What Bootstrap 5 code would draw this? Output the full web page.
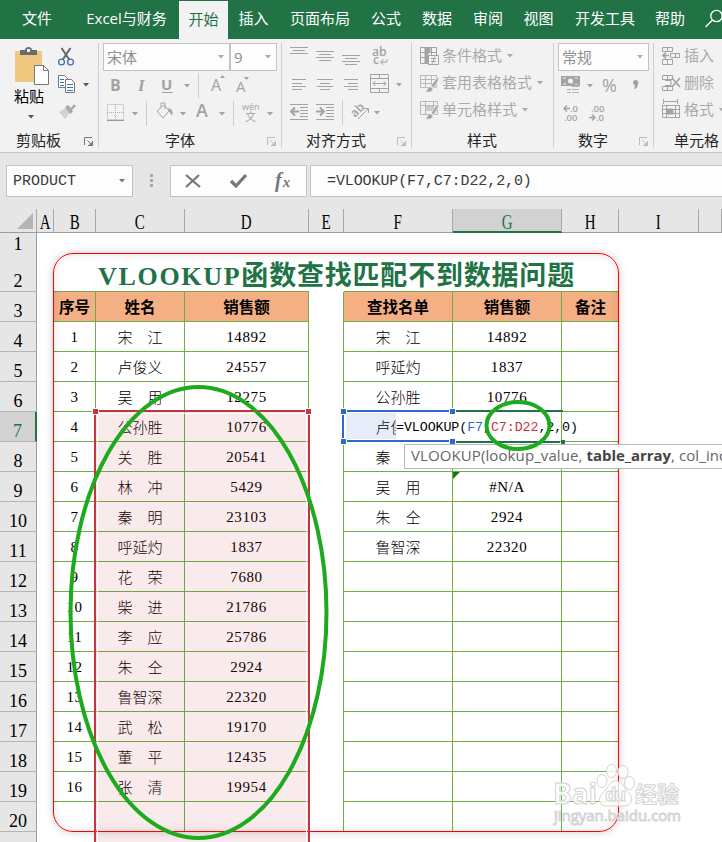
<!DOCTYPE html>
<html lang="zh-CN">
<head>
<meta charset="utf-8">
<title>VLOOKUP</title>
<link href="https://cdn.jsdelivr.net/npm/bootstrap@5.3.0/dist/css/bootstrap.min.css" rel="stylesheet">
<style>
body{width:722px;height:842px;overflow:hidden;background:#fff;color:#000;font-family:"Open Sans","Noto Sans CJK SC",sans-serif;font-size:15px;line-height:1}
svg{display:block;flex:none}
.tabs{height:39px;background:#217346;color:#fff}
.tabs>a{color:#fff;text-decoration:none;height:38px;flex:none;padding-bottom:1px}
.tabs>a.on{background:#f2f2f2;color:#217346;margin-top:1px}
.w74{width:74px}.w105{width:105px}.w49{width:49px}.w51{width:51px}.w82{width:82px}.w50{width:50px}.w52{width:52px}.w48{width:48px}
.ribbon{height:114px;background:#f2f2f2;border-bottom:1px solid #c8c8c8}
.grp{flex:none;height:113px;position:relative}
.grp:not(:last-child)::after{content:"";position:absolute;right:0;top:4px;height:105px;width:1px;background:#cfcfcf}
.g1{width:99px}.g2{width:183px}.g3{width:130px}.g4{width:142px}.g5{width:100px}.g6{width:68px}
.cap{height:24px;padding-bottom:0;color:#262626}
.cap svg{position:absolute;right:5px;bottom:5px}
.off{color:#aaa}
.pick{height:28px;border:1px solid #c3c3c3;background:#fdfdfd;color:#8e8e8e;padding:0 5px 0 3px;font-size:15px}
.num{font-family:"Open Sans",sans-serif}
.lines{height:27px;gap:2px;padding-left:8px;white-space:nowrap}
.fbar{height:56px;background:#e6e6e6;padding-top:12px}
.fbox{height:32px;border:1px solid #c3c3c3;background:#fdfdfd;flex:none;color:#333}
.sun{font-family:"Liberation Mono",monospace;font-size:15px;color:#3a3a3a}
.sheet{position:relative;width:722px;height:633px;overflow:hidden}
.cols,.line{display:grid;grid-template-columns:37px 17px 42px 89px 124px 35px 109px 109px 57px 80px 23px}
.cols{height:24px;grid-template-rows:23px;background:#e6e6e6;border-bottom:1px solid #9c9c9c;font:20px/20px "Liberation Serif",serif}
.cols>div{border-right:1px solid #a8a8a8;display:flex;align-items:center;justify-content:center;padding-top:3px}
.cols span{transform:scaleX(.75)}
.cols .on{background:#d2d2d2;color:#217346;box-shadow:0 1px #217346,inset 0 -1px #217346}
.line{height:30px}
.line>div{display:flex;align-items:center;justify-content:center;white-space:pre;min-width:0;padding-top:2px}
.line>.rh{background:#e6e6e6;border-right:1px solid #9c9c9c;border-bottom:1px solid #b4b4b4;align-items:flex-end;font:18px/18px "Liberation Serif",serif;padding-bottom:1px}
.line>.rh.on{background:#d2d2d2;color:#217346;border-right:2px solid #217346}
.gx{border-right:1px solid #70ad47;border-bottom:1px solid #70ad47}
.gl{border-right:1px solid #70ad47}
.gb{border-bottom:1px solid #70ad47}
.line>.hd{background:#f4b084;font:bold 15.5px "Noto Sans CJK SC",sans-serif;line-height:15px;padding-top:0}
.dg{font:15px "Liberation Serif","Noto Sans CJK SC",serif;letter-spacing:.6px}
.line>.zh{font:15px "Noto Sans CJK SC",sans-serif;line-height:16px;font-weight:300;padding-top:0}
.lay{position:absolute}
.heading{left:98px;top:48px;color:#217346;font:bold 26px/34px "Liberation Serif","Noto Sans CJK SC",serif;letter-spacing:1.7px;white-space:nowrap}
.heading .cj{font-family:"Noto Sans CJK SC",sans-serif;font-size:27px;letter-spacing:.8px}
.frame{left:53px;top:44px;width:566px;height:579px;border:1px solid #f00;border-radius:20px;box-shadow:0 0 9px rgba(0,0,0,.2),inset 0 0 9px rgba(0,0,0,.13)}
.edit{left:396px;top:206px;width:165px;height:25px;background:#fff}
.formula{left:396px;top:211px;font:13.33px/16px "Liberation Mono",monospace;letter-spacing:-.09px;white-space:nowrap}
.tip{left:404px;top:235px;width:330px;height:25px;border:1px solid #b8b8b8;background:#fff;color:#666;font:15px/21px "Open Sans",sans-serif;letter-spacing:.1px;padding-left:6px;white-space:nowrap}
.tip b{color:#444;letter-spacing:-.05px}
</style>
<script src="https://cdn.jsdelivr.net/npm/bootstrap@5.3.0/dist/js/bootstrap.bundle.min.js"></script>
</head>
<body>
<svg width="0" height="0" class="position-absolute">
<defs>
<g id="launch" fill="none" stroke="currentColor"><path d="M.5 8V.5H8M3.500 3.500L8 8M8.500 4v4.500H4"/><path d="M8.500 5v3.500H5z" fill="currentColor"/></g>
<g id="car"><path d="M0 0h6L3 3.500z"/></g>
<g id="brush"><path d="M19 5c-2 0-7 7-8 9l2.500 2C16 13 19 8 19 5z" fill="#a6a6a6"/><path d="M10 14.500c-3 0-2 4-5 5 4 1.500 8 .5 8-3z" fill="#a6a6a6"/></g>
</defs></svg>
<nav class="tabs d-flex">
<a class="w74 d-flex align-items-center justify-content-center">文件</a><a class="w105 d-flex align-items-center justify-content-center">Excel与财务</a><a class="on w49 d-flex align-items-center justify-content-center">开始</a><a class="w51 d-flex align-items-center justify-content-center">插入</a><a class="w82 d-flex align-items-center justify-content-center">页面布局</a><a class="w50 d-flex align-items-center justify-content-center">公式</a><a class="w52 d-flex align-items-center justify-content-center">数据</a><a class="w50 d-flex align-items-center justify-content-center">审阅</a><a class="w51 d-flex align-items-center justify-content-center">视图</a><a class="w82 d-flex align-items-center justify-content-center">开发工具</a><a class="w48 d-flex align-items-center justify-content-center">帮助</a>
<svg width="28" height="39" viewBox="694 0 28 39" fill="none" stroke="#fff" stroke-width="1.300"><circle cx="716.500" cy="16" r="5.700"/><path d="M712.500 20l-7 7"/></svg>
</nav>

<section class="ribbon d-flex">
<div class="grp g1 d-flex flex-column">
 <div class="d-flex" style="height:89px">
  <div class="d-flex flex-column">
   <svg width="56" height="49" viewBox="0 39 56 49"><rect x="15" y="51" width="27" height="31" rx="1" fill="#edc87e"/><path d="M20 50h5c0-4 7-4 7 0h5v5H20z" fill="#6b6b6b"/><rect x="27" y="49" width="3" height="3" fill="#f2f2f2"/><path d="M34.500 65.500h9l5 5v14h-14z" fill="#fff" stroke="#777"/><path d="M43.500 65.500v5h5" fill="none" stroke="#777"/></svg>
   <div style="padding:1px 0 0 14px">粘贴</div>
   <svg width="56" height="20" viewBox="0 104 56 20" fill="#555"><use href="#car" x="28" y="115"/></svg>
  </div>
  <svg width="42" height="89" viewBox="56 39 42 89"><g fill="none"><path d="M61.500 48l8 12M70.500 48l-8 12" stroke="#666" stroke-width="2"/><circle cx="61.500" cy="62" r="2.900" stroke="#3d72b4" stroke-width="1.300"/><circle cx="70.500" cy="62" r="2.900" stroke="#3d72b4" stroke-width="1.300"/></g>
  <g stroke="#777" fill="#fff"><path d="M58.500 75.500h6l3 3v9h-9z"/><path d="M65.500 79.500h6l3 3v10h-9z"/></g><path d="M60 79.500h4m-4 3h4m-4 3h4M67 84.500h6m-6 3h6m-6 3h6" stroke="#3d72b4"/><use href="#car" x="83" y="83" fill="#555"/>
  <path d="M59 112l8-5 4 4-6 8z" fill="#d6d0d4"/><path d="M65 107l3-2 3 3 3-4 2 2-4 4 1 2-3 2z" fill="#aaa"/></svg>
 </div>
 <div class="cap ps-3 d-flex align-items-center">剪贴板<svg width="10" height="10" color="#777"><use href="#launch"/></svg></div>
</div>

<div class="grp g2 d-flex flex-column">
 <div class="d-flex" style="padding:4px 0 0 4px">
  <div class="pick d-flex align-items-center justify-content-between" style="width:127px">宋体<svg width="6" height="4" fill="#aaa"><use href="#car"/></svg></div>
  <div class="pick d-flex align-items-center justify-content-between num" style="width:47px">9<svg width="6" height="4" fill="#aaa"><use href="#car"/></svg></div>
 </div>
 <svg width="182" height="57" viewBox="99 71 182 57" fill="#a3a3a3" font-family="Open Sans">
  <text x="110" y="91" font-size="16" font-weight="700">B</text><text x="138" y="91" font-size="17" font-family="Liberation Serif" font-weight="700" font-style="italic">I</text><text x="161" y="90" font-size="15" font-weight="700">U</text><path d="M162 92.500h11" stroke="#a3a3a3"/><use href="#car" x="184" y="84"/>
  <path d="M198.500 73v25M146.500 101v25M233.500 101v25" stroke="#ccc"/>
  <text x="211" y="91" font-size="16">A</text><path d="M220 78l2.500-3 2.500 3zM244 77h5l-2.500 3z"/><text x="236" y="92" font-size="15">A</text>
  <path d="M107.500 104.500h16v15h-16zM115.500 104v16M107 112.500h17" fill="#f7f0f7" stroke="#aaa" stroke-dasharray="1 1"/><path d="M107 120.500h17" stroke="#999"/><use href="#car" x="132" y="112"/>
  <path d="M157 111l7-6 5 6-6 7zM161 107v-4h4v6" fill="none" stroke="#a3a3a3"/><path d="M168 108c5 1 5 5 4 8l-3-5z"/><use href="#car" x="180" y="112"/>
  <text x="196" y="117" font-size="18" font-weight="600">A</text><use href="#car" x="219" y="112"/>
  <text x="242" y="110" font-size="9">wén</text><text x="245" y="121" font-size="11" font-family="Noto Sans CJK SC">文</text><use href="#car" x="267" y="112"/></svg>
 <div class="cap d-flex align-items-center" style="padding-left:66px;margin-top:0">字体<svg width="10" height="10" color="#bbb"><use href="#launch"/></svg></div>
</div>

<div class="grp g3 d-flex flex-column">
 <svg width="129" height="89" viewBox="282 39 129 89" fill="none" stroke="#a3a3a3">
  <path d="M290 47.500h18M293 50.500h12M290 53.500h18M316 51.500h18M319 54.500h12M316 57.500h18M319 60.500h12M342 55.500h18M345 58.500h12M342 61.500h18M345 64.500h12"/>
  <path d="M292 79.500h14M292 83.500h10M292 86.500h14M292 89.500h10M317 79.500h16M320 83.500h10M317 86.500h16M320 89.500h10M344 79.500h14M348 83.500h10M344 86.500h14M348 89.500h10"/>
  <path d="M370.500 74.500h18v18h-18zM370 78.500h19M370 88.500h19M379.500 74v4M379.500 89v4M373 83.500h13M375.500 81l-2.500 2.500 2.500 2.500M383.500 81l2.500 2.500-2.500 2.500"/>
  <path d="M290 104.500h18M300 107.500h8M300 110.500h8M300 113.500h8M290 119.500h18M300 116.500h8M316 104.500h18M326 107.500h8M326 110.500h8M326 113.500h8M316 119.500h18M326 116.500h8"/>
  <path d="M291 111.500h8M295 107.500l-4 4 4 4M316 111.500h8M320 107.500l4 4-4 4" stroke-width="2"/><path d="M342.500 100v25" stroke="#ccc"/>
  <path d="M358 119l10-10M364 108.500h4.500v4.500M387 59v3h-6M383.500 59.500l-3 2.500 3 2.500"/>
  <g fill="#a3a3a3" stroke="none" font-family="Open Sans" font-size="12"><text x="372" y="56" font-weight="600">ab</text><text x="373" y="64" font-weight="600">c</text><text transform="translate(355 118) rotate(-45)" font-weight="600">ab</text><use href="#car" x="396" y="83"/><use href="#car" x="374" y="111"/></g></svg>
 <div class="cap d-flex align-items-center" style="padding-left:24px">对齐方式<svg width="10" height="10" color="#bbb"><use href="#launch"/></svg></div>
</div>

<div class="grp g4 d-flex flex-column off">
 <div style="padding-top:3px;height:89px">
 <div class="lines d-flex align-items-center"><svg width="20" height="20" fill="none" stroke="#a3a3a3"><path d="M.500 1.500h16v16H.500zM0 6.500h17M0 11.500h12M5.500 1v17M11.500 1v9"/><path d="M5 2h5v4H5zM5 7h3v10H5z" fill="#a3a3a3"/><path d="M8.500 9.500h10v9h-10z" fill="#f5f0f5"/><path d="M11 12.500h5m-5 3h5m-1-5l-3 7"/></svg>条件格式<svg width="10" height="4" fill="#aaa"><use href="#car" x="3"/></svg></div>
 <div class="lines d-flex align-items-center"><svg width="20" height="22" fill="none" stroke="#a3a3a3"><path d="M.500 3.500h16v12H.500zM0 7.500h17M0 11.500h17M5.500 3v13M11.500 3v13" stroke="#b8b8b8"/><use href="#brush" stroke="#f2f2f2" stroke-width=".8"/></svg>套用表格格式<svg width="10" height="4" fill="#aaa"><use href="#car" x="3"/></svg></div>
 <div class="lines d-flex align-items-center"><svg width="20" height="22" fill="none" stroke="#a3a3a3"><path d="M.500 2.500h17v13H.500zM0 6.500h18M5.500 3v13M13.500 2v13" stroke="#b8b8b8"/><path d="M6 7h7v5H6z" fill="#ccc" stroke="none"/><use href="#brush" stroke="#f2f2f2" stroke-width=".8"/></svg>单元格样式<svg width="10" height="4" fill="#aaa"><use href="#car" x="3"/></svg></div>
 </div>
 <div class="cap d-flex align-items-center" style="padding-left:55px">样式</div>
</div>

<div class="grp g5 d-flex flex-column">
 <div style="padding:4px 0 0 4px"><div class="pick d-flex align-items-center justify-content-between" style="width:91px">常规<svg width="6" height="4" fill="#aaa"><use href="#car"/></svg></div></div>
 <svg width="99" height="57" viewBox="554 71 99 57" fill="#a3a3a3" font-family="Open Sans">
 <path d="M561 76h19v10h-19z"/><path d="M563 78h3m9 0h3m-15 6h3m9 0h3" stroke="#f2f2f2"/><circle cx="570.500" cy="81" r="2.500" fill="#f2f2f2"/><path d="M566 86h13v9h-13z" fill="#f2f2f2"/><path d="M572 83.500h7m-7 3h7m-7 3h7m-7 3h7m-12-3h4m-4 3h4" stroke="#b8b0b8"/><use href="#car" x="587" y="84"/>
 <text x="602" y="92" font-size="18">%</text><path d="M633 83a2.700 2.700 0 1 1 5 1c0 3-2 5-4 5l1-3z"/>
 <g font-size="9.500" font-weight="600"><text x="570" y="112">.0</text><text x="564" y="121">.00</text><text x="591" y="112">.00</text><text x="596" y="121">.0</text></g><path d="M570 108.500h-6m3-3l-3 3 3 3M589 117.500h6m-3-3l3 3-3 3" fill="none" stroke="#a3a3a3" stroke-width="1.500"/></svg>
 <div class="cap d-flex align-items-center" style="padding-left:24px">数字<svg width="10" height="10" color="#bbb"><use href="#launch"/></svg></div>
</div>

<div class="grp g6 d-flex flex-column overflow-hidden off">
 <div style="padding-top:3px;height:89px">
 <div class="lines d-flex align-items-center"><svg width="20" height="20" fill="none" stroke="#a3a3a3"><path d="M.500 1.500h10v4H.500zM5.500 1v5M.500 13.500h10v5H.500zM5.500 13v6M8.500 7.500h9v4h-9zM13.500 7v5"/><path d="M1 9.500h6M4 6.500l-3 3 3 3" stroke-width="1.700"/></svg>插入</div>
 <div class="lines d-flex align-items-center"><svg width="20" height="20" fill="none" stroke="#a3a3a3"><path d="M.500 2.500h10v4H.500zM5.500 2v5M.500 13.500h10v4H.500zM5.500 13v5M3 7.500h6v5H3"/><path d="M10 5l8 9M18 5l-8 9" stroke-width="1.700"/></svg>删除</div>
 <div class="lines d-flex align-items-center"><svg width="20" height="22" fill="none" stroke="#a3a3a3"><path d="M1 2.500h14M1.500 0v5M15.500 0v5M.500 6.500h17v12H.500zM0 10.500h18M0 14.500h18M4.500 6v13M13.500 6v13"/><path d="M5 10h6v5H5z" fill="#a3a3a3"/></svg>格式<svg width="10" height="4" fill="#aaa"><use href="#car" x="3"/></svg></div>
 </div>
 <div class="cap d-flex align-items-center" style="padding-left:20px;white-space:nowrap">单元格</div>
</div>
</section>

<section class="fbar d-flex">
 <div class="fbox sun d-flex align-items-center justify-content-between" style="width:127px;padding:0 6px;margin-left:6px">PRODUCT<svg width="7" height="4" fill="#777"><use href="#car"/></svg></div>
 <svg width="37" height="32" viewBox="133 165 37 32" fill="#aaa"><path d="M150 174h3v3h-3zM150 179h3v3h-3zM150 184h3v3h-3z"/></svg>
 <div class="fbox" style="width:137px"><svg width="135" height="30" viewBox="171 166 135 30" fill="none" stroke="#777"><path d="M186 175l14 12M199 175l-13 12" stroke-width="2.200"/><path d="M231 181l5 5 10-11" stroke-width="3.200"/><text x="275" y="187" font-family="Liberation Serif" font-style="italic" font-weight="700" font-size="20" fill="#777" stroke="none">f<tspan font-size="15" dx="1">x</tspan></text></svg></div>
 <div class="fbox sun d-flex align-items-center ps-3 flex-grow-1 border-end-0" style="margin-left:3px;letter-spacing:-.1px">=VLOOKUP(F7,C7:D22,2,0)</div>
</section>

<main class="sheet">
 <div class="cols" id="cols"></div>
 <div id="rows"></div>
 <div class="lay heading">VLOOKUP<span class="cj">函数查找匹配不到数据问题</span></div>
 <div class="lay frame"></div>
 <div class="lay edit"></div>
 <div class="lay formula">=VLOOKUP(<span style="color:#3069c8">F7</span>,<span style="color:#c4353f">C7:D22</span>,2,0)</div>
 <svg class="lay" style="left:0;top:0" width="722" height="633" viewBox="0 209 722 633">
  <path d="M94 410h216v440H94z" fill="rgba(192,50,60,.1)"/><path d="M97.500 850V413.500h209V850" fill="none" stroke="#fff"/><path d="M95 850V411h214v439" fill="none" stroke="#c4353f" stroke-width="2"/>
  <g fill="#c4353f" stroke="#fff"><path d="M92.500 408.500h6v6h-6zM305.500 408.500h6v6h-6z"/></g>
  <path d="M346 413h50v26h-50z" fill="#3069c8" opacity=".12"/><path d="M343 411h110M343 441h110M343 411v30" fill="none" stroke="#3069c8" stroke-width="2"/><path d="M455 411h108M455 442h105" stroke="#217346" stroke-width="2"/>
  <g fill="#3069c8" stroke="#fff"><path d="M340.500 408.500h6v6h-6zM340.500 438.500h6v6h-6zM449.500 408.500h6v6h-6zM449.500 438.500h6v6h-6z"/></g><path d="M561 440h4v4h-4z" fill="#217346"/>
  <path d="M453 472h7l-7 7z" fill="#107c10"/>
 </svg>
 <div class="lay tip">VLOOKUP(lookup_value, <b>table_array</b>, col_index_num</div>
 <svg class="lay" style="left:0;top:0" width="722" height="633" viewBox="0 209 722 633">
  <g fill="none" stroke="#1eaa1e" stroke-width="4"><ellipse cx="198.500" cy="612.500" rx="128" ry="225.500"/><ellipse cx="518" cy="425.500" rx="31.500" ry="23.500"/></g>
  <g fill="#fff" fill-opacity=".8" stroke="#d3d3d3" stroke-width="1"><ellipse cx="602" cy="781" rx="5" ry="6.500"/><ellipse cx="611.500" cy="771" rx="5" ry="6.500"/><ellipse cx="623" cy="772" rx="5" ry="6.500"/><ellipse cx="629.500" cy="783" rx="5" ry="6.500"/><path d="M616 781c7 0 7 7 13 12 6 7 1 13-5 13h-18c-6 0-9-6-4-12 6-5 7-13 14-13z"/>
  <g font-family="Open Sans" font-weight="700"><text x="553" y="804" font-size="28" textLength="44">Bai</text><text x="605" y="801" font-size="18" textLength="21">du</text><text x="635" y="802" font-size="22" font-family="Noto Sans CJK SC">经验</text><text x="554" y="821" font-size="15" font-weight="400" textLength="127">jingyan.baidu.com</text></g></g>
 </svg>
</main>

<script>
const left=['宋　江','卢俊义','吴　用','公孙胜','关　胜','林　冲','秦　明','呼延灼','花　荣','柴　进','李　应','朱　仝','鲁智深','武　松','董　平','张　清'];
const sales=[14892,24557,12275,10776,20541,5429,23103,1837,7680,21786,25786,2924,22320,19170,12435,19954];
const look=[['宋　江','14892'],['呼延灼','1837'],['公孙胜','10776'],['卢俊义',''],['秦　明',''],['吴　用','#N/A'],['朱　仝','2924'],['鲁智深','22320']];
const cell=(c,t='')=>`<div class="${c}">${t}</div>`;
document.getElementById('cols').innerHTML='<div style="justify-content:flex-end;padding:1px 3px 0 0"><svg width="16" height="16"><path d="M16 0v16H0z" fill="#b4b4b4"/></svg></div>'+[...'ABCDEFGHI',''].map(c=>`<div class="${c==='G'?'on':''}"><span>${c}</span></div>`).join('');
let out='';
for(let r=1;r<=21;r++){
  let h=cell('rh'+(r===7?' on':''),r<21?r:'');
  if(r===2)h+=cell('')+cell('gb')+cell('gb')+cell('gb')+cell('')+cell('gb')+cell('gb')+cell('gb');
  if(r===3)h+=cell('')+cell('gx hd','序号')+cell('gx hd','姓名')+cell('gx hd','销售额')+cell('gl')+cell('gx hd','查找名单')+cell('gx hd','销售额')+cell('gb hd','备注');
  if(r>3&&r<21){
    const i=r-4,g=r===20?'gl':'gx',p=look[i]||['',''];
    h+=cell('')+cell(g+' dg',i<16?i+1:'')+cell(g+' zh',left[i]||'')+cell(g+' dg',sales[i]||'')+cell('gl')+cell(g+' zh',p[0])+cell(g+' dg',p[1])+cell(r===20?'':'gb');
  }
  out+=`<div class="line" style="height:${r===1?21:r===2?38:30}px">${h}</div>`;
}
document.getElementById('rows').innerHTML=out;
</script>
</body>
</html>
